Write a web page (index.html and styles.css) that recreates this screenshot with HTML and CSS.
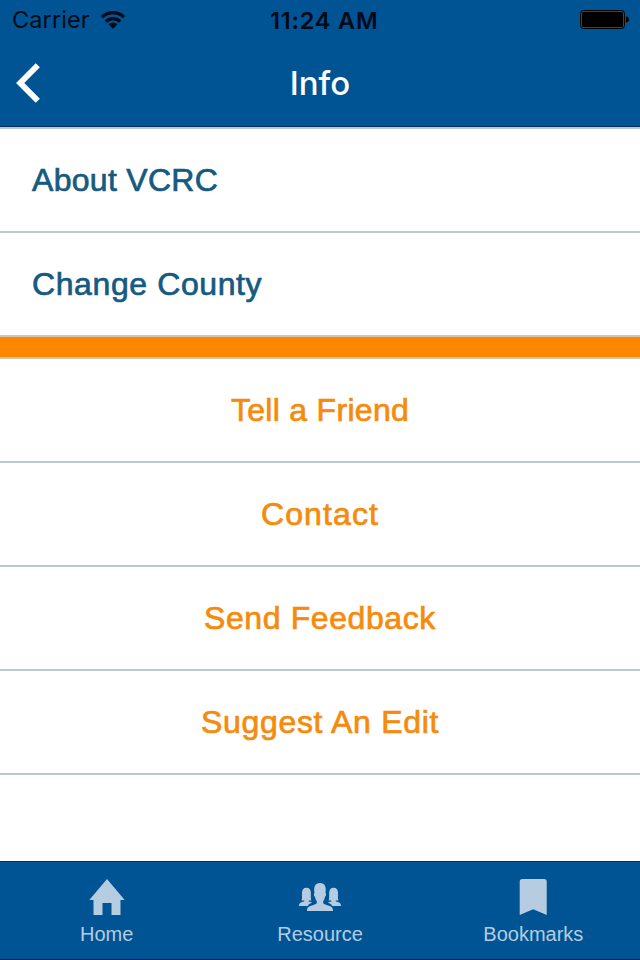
FILE: index.html
```html
<!DOCTYPE html>
<html lang="en">
  <head>
    <meta charset="UTF-8" />
    <meta name="viewport" content="width=device-width, initial-scale=1.0" />
    <title>Info</title>
    <link rel="stylesheet" href="styles.css">
  </head>
  <body>
    <header>
      <div class="status">
        <div class="carrier">
          <span class="carrier-name">Carrier</span>
          <svg width="26" height="20" viewBox="0 0 26 20">
            <g fill="none" stroke="#000a18" stroke-width="3.2">
              <path d="M2 7.200a15.600 15.600 0 0 1 22 0" />
              <path d="M5.800 11.600a10.200 10.200 0 0 1 14.400 0" />
            </g>
            <path d="M13 18.800l-4.500-4.500a6.400 6.400 0 0 1 9 0z" fill="#000a18" />
          </svg>
        </div>
        <span class="time">11:24 AM</span>
        <svg class="battery" width="50" height="20" viewBox="0 0 50 20">
          <rect x="0.5" y="0.5" width="44" height="18" rx="3" fill="none" stroke="#000" />
          <rect x="2" y="2" width="41" height="15" rx="1.5" />
          <path d="M46 6.200c4 .8 4 5.800 0 6.600z" />
        </svg>
      </div>
      <div class="titlebar">
        <a class="back" href="#" aria-label="Back">
          <svg width="26" height="42" viewBox="0 0 26 42">
            <path d="M21.800 3.200L4.200 21l17.600 17.800" fill="none" stroke="#fff" stroke-width="5.900" />
          </svg>
        </a>
        <h1>Info</h1>
      </div>
    </header>
    <main>
      <ul class="links">
        <li><span class="about">About VCRC</span></li>
        <li><span class="county">Change County</span></li>
      </ul>
      <div class="divider"></div>
      <ul class="actions">
        <li><span class="tell">Tell a Friend</span></li>
        <li><span class="contact">Contact</span></li>
        <li><span class="feedback">Send Feedback</span></li>
        <li><span class="suggest">Suggest An Edit</span></li>
      </ul>
    </main>
    <nav>
      <a href="#">
        <svg width="44" height="40" viewBox="0 0 44 40">
          <path d="M22 1L39.700 22H35.500v15h-9V25h-9v12h-9V22H4.300z" />
        </svg>
        <span>Home</span>
      </a>
      <a href="#">
        <svg width="44" height="40" viewBox="0 0 44 40">
          <path id="side" d="M1 28c0-2.800 1.300-3.400 5.200-4.400v-1.200H3.500C4.400 20.500 3.900 18 3.900 15.500c0-3.700 1.500-5.700 4.500-5.700s4.500 2 4.500 5.700c0 2.500-.4 5 .5 6.900h-2.800v1.200c1.800.4 2.700.7 3.400 1.200-2 .7-3.500 1.500-4.200 3.200z" />
          <use href="#side" transform="matrix(-1 0 0 1 44 0)" />
          <path d="M9 33c0-4 1.500-4.700 6.500-6.100 2.700-.8 3.700-1.200 3.300-3.600-1-1.100-1.500-2.500-1.700-4.200-1.200-.7-1.500-3.600-.6-4.200C15.500 9 17 5 22 5s6.500 4 5.500 9.900c.9.600.6 3.500-.6 4.200-.2 1.700-.7 3.100-1.700 4.200-.4 2.400.6 2.800 3.300 3.600 5 1.400 6.500 2.100 6.500 6.100z" />
        </svg>
        <span>Resource</span>
      </a>
      <a href="#">
        <svg width="44" height="40" viewBox="0 0 44 40">
          <path d="M11.200 1h22q2.500 0 2.500 2.500V37L22.200 31.300 8.700 37V3.500Q8.700 1 11.200 1z" />
        </svg>
        <span>Bookmarks</span>
      </a>
    </nav>
  </body>
</html>
```

FILE: styles.css
```css
* {
  box-sizing: border-box;
}
body {
  display: flex;
  flex-direction: column;
  height: 100vh;
  margin: 0;
  background-color: #fff;
  font-family: "Liberation Sans", Arial, sans-serif;
}
a {
  color: inherit;
  text-decoration: none;
}
svg {
  display: block;
}
header {
  height: 127px;
  background-color: #005494;
  border-bottom: 1px solid #03305c;
  font-family: Inter, sans-serif;
}
.status {
  display: grid;
  grid-template-columns: 258px 1fr 60px;
  align-items: center;
  height: 40px;
  padding: 0 10px 0 12px;
  font-size: 23.5px;
  color: #000a18;
}
.carrier {
  display: flex;
  align-items: center;
  gap: 10px;
}
.carrier-name {
  padding-bottom: 2px;
  letter-spacing: 0.1px;
}
.time {
  font-weight: 600;
  font-size: 23.5px;
  letter-spacing: 0.8px;
}
.battery {
  justify-self: end;
}
.titlebar {
  display: grid;
  grid-template-columns: 60px 1fr 60px;
  align-items: center;
  height: 86px;
  color: #fff;
}
.back {
  padding-left: 16px;
}
h1 {
  margin: 0;
  font-size: 33px;
  font-weight: 500;
  text-align: center;
}
main {
  flex: 1;
}
ul {
  margin: 0;
  padding: 0;
  list-style: none;
  border-top: 2px solid #bac9d5;
}
li {
  display: flex;
  align-items: center;
  height: 104px;
  padding: 0 32px;
  border-bottom: 2px solid #bac9d5;
  font-size: 32px;
  white-space: nowrap;
}
.links {
  color: #155a80;
  -webkit-text-stroke: 0.7px #155a80;
}
.actions {
  color: #f68a0c;
  -webkit-text-stroke: 0.7px #f68a0c;
}
.actions li {
  justify-content: center;
}
.about {
  letter-spacing: 0.3px;
}
.county,
.feedback {
  letter-spacing: 0.6px;
}
.tell {
  letter-spacing: 0.3px;
}
.contact {
  letter-spacing: 1.1px;
}
.suggest {
  letter-spacing: 0.7px;
}
.links li:last-child,
.actions {
  border-color: #d4c5b2;
}
.divider {
  height: 20px;
  background-color: #fb8800;
}
nav {
  display: grid;
  grid-template-columns: repeat(3, 1fr);
  height: 99px;
  padding-top: 16px;
  background-color: #005494;
  border-top: 1px solid #03305c;
  border-bottom: 1px solid #001f3f;
  color: #b4cce2;
  font-size: 20px;
}
nav a {
  display: flex;
  flex-direction: column;
  align-items: center;
  gap: 5px;
}
nav svg {
  fill: #b6cce1;
}
```
